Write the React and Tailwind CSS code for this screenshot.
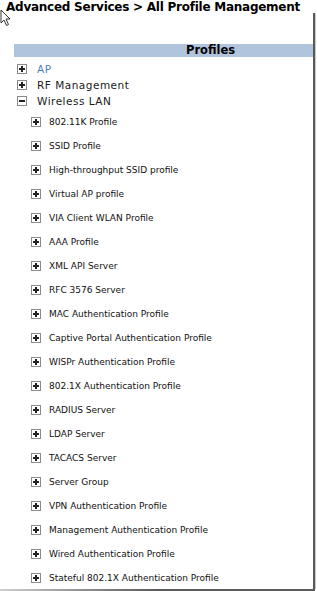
const topItems = [
  { label: "AP", open: false, link: true },
  { label: "RF Management", open: false },
  { label: "Wireless LAN", open: true },
];

const subItems = [
  "802.11K Profile",
  "SSID Profile",
  "High-throughput SSID profile",
  "Virtual AP profile",
  "VIA Client WLAN Profile",
  "AAA Profile",
  "XML API Server",
  "RFC 3576 Server",
  "MAC Authentication Profile",
  "Captive Portal Authentication Profile",
  "WISPr Authentication Profile",
  "802.1X Authentication Profile",
  "RADIUS Server",
  "LDAP Server",
  "TACACS Server",
  "Server Group",
  "VPN Authentication Profile",
  "Management Authentication Profile",
  "Wired Authentication Profile",
  "Stateful 802.1X Authentication Profile",
];

function ToggleBox({ open }) {
  return (
    <svg width="10" height="10" viewBox="0 0 10 10" className="shrink-0">
      <rect x="0.5" y="0.5" width="9" height="9" fill="#fff" stroke="#8a8a8a" />
      <rect x="2" y="4" width="6" height="2" fill="#222" />
      {!open && <rect x="4" y="2" width="2" height="6" fill="#222" />}
    </svg>
  );
}

function Cursor() {
  return (
    <svg width="12" height="18" viewBox="0 0 12 18">
      <path d="M1 1 L1 14 L4 11 L6.5 16.5 L8.5 15.5 L6 10 L10 10 Z" fill="#fff" stroke="#333" strokeWidth="1" strokeLinejoin="round" />
    </svg>
  );
}

export default function App() {
  return (
    <div className="w-[317px] h-[591px] bg-white overflow-hidden" style={{ fontFamily: '"DejaVu Sans", Verdana, sans-serif' }}>
      <div className="flex">
        {/* main panel */}
        <div className="w-[313px] h-[587px] bg-white relative">
          <div className="absolute left-0 top-[9px]">
            <Cursor />
          </div>
          <h1 className="pl-[6px] text-[12px] leading-[15px] font-bold text-black tracking-[-0.25px] whitespace-nowrap">
            Advanced Services &gt; All Profile Management
          </h1>

          {/* profiles header */}
          <div className="ml-[14px] mt-[29px] h-[13px] bg-[#b0c4de] flex items-center">
            <span className="pl-[172px] text-[11.5px] font-bold text-black leading-[13px]">Profiles</span>
          </div>

          {/* tree */}
          <div className="pl-[17px] pt-[4px]">
            {topItems.map((it) => (
              <div key={it.label} className="h-[16px] flex items-center gap-[10px]">
                <ToggleBox open={it.open} />
                <span
                  className={
                    "text-[10.5px] tracking-[0.5px] leading-[16px] " +
                    (it.link ? "text-[#4f7fc0]" : "text-[#1a1a1a]")
                  }
                >
                  {it.label}
                </span>
              </div>
            ))}
          </div>

          <div className="pl-[31px] pt-[1px]">
            {subItems.map((s) => (
              <div key={s} className="h-[24px] flex items-center gap-[8px]">
                <ToggleBox open={false} />
                <span className="text-[9px] leading-[24px] text-[#111]">{s}</span>
              </div>
            ))}
          </div>
        </div>
        {/* right shadow edge */}
        <div className="pt-[13px] flex">
          <div className="w-[2px] h-[576px] bg-[#5a5a5a]"></div>
          <div className="w-[1px] h-[576px] bg-[#c8c8c8]"></div>
        </div>
      </div>
      {/* bottom shadow edge */}
      <div className="h-[2px] w-[315px] bg-gradient-to-r from-[#d0d0d0] via-[#5a5a5a] to-[#5a5a5a]"></div>
      <div className="h-[1px] w-[315px] bg-[#c8c8c8]"></div>
    </div>
  );
}
